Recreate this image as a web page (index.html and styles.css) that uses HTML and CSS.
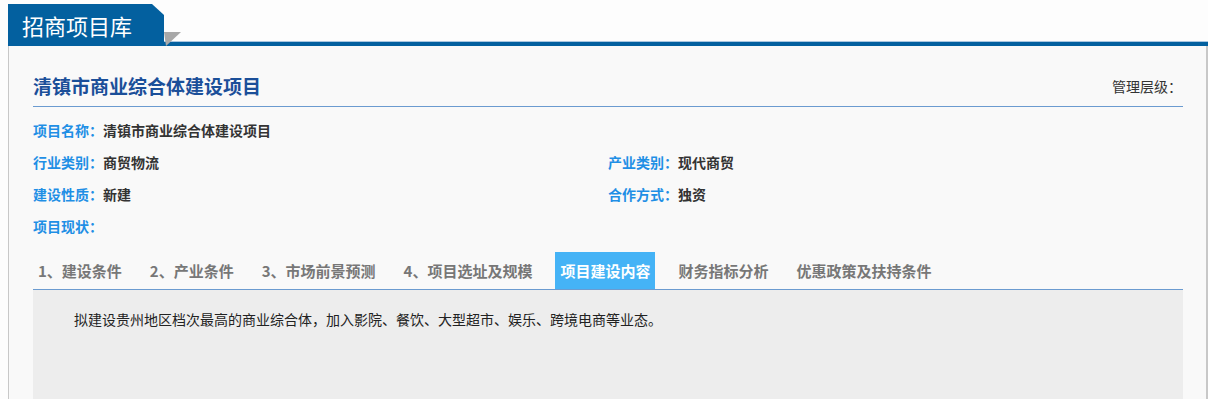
FILE: index.html
```html
<!DOCTYPE html>
<html lang="zh-CN">
<head>
    <meta charset="UTF-8">
    <meta name="viewport" content="width=device-width, initial-scale=1.0">
    <title>招商项目库</title>
    <link rel="stylesheet" href="styles.css">
</head>
<body>
    <div class="page">
        <!-- Header tab -->
        <div class="page-header">
            <div class="header-tab">招商项目库</div>
            <div class="header-line"></div>
        </div>

        <div class="project-box">
            <div class="project-title-row">
                <h1 class="project-title">清镇市商业综合体建设项目</h1>
                <span class="manage-level">管理层级：</span>
            </div>

            <!-- Basic info -->
            <div class="info-grid">
                <div class="info-item full"><span class="info-label">项目名称：</span><span class="info-value">清镇市商业综合体建设项目</span></div>
                <div class="info-item"><span class="info-label">行业类别：</span><span class="info-value">商贸物流</span></div>
                <div class="info-item"><span class="info-label">产业类别：</span><span class="info-value">现代商贸</span></div>
                <div class="info-item"><span class="info-label">建设性质：</span><span class="info-value">新建</span></div>
                <div class="info-item"><span class="info-label">合作方式：</span><span class="info-value">独资</span></div>
                <div class="info-item full"><span class="info-label">项目现状：</span><span class="info-value"></span></div>
            </div>

            <!-- Tabs -->
            <ul class="tabs">
                <li class="tab">1、建设条件</li>
                <li class="tab">2、产业条件</li>
                <li class="tab">3、市场前景预测</li>
                <li class="tab">4、项目选址及规模</li>
                <li class="tab active">项目建设内容</li>
                <li class="tab">财务指标分析</li>
                <li class="tab">优惠政策及扶持条件</li>
            </ul>
            <div class="tab-panel">
                <p>拟建设贵州地区档次最高的商业综合体，加入影院、餐饮、大型超市、娱乐、跨境电商等业态。</p>
            </div>
        </div>
    </div>
</body>
</html>
```

FILE: styles.css
```css
body {
    margin: 0;
    padding: 0;
    background: #fdfdfd;
    font-family: "Noto Sans CJK SC", "Noto Sans", sans-serif;
    color: #333;
}

.page {
    margin-left: 8px;
    width: 1200px;
}

.page-header {
    display: flex;
    align-items: flex-end;
    height: 42px;
    padding-top: 4px;
}

.header-tab {
    width: 156px;
    height: 42px;
    line-height: 42px;
    padding-left: 14px;
    box-sizing: border-box;
    background: #03609f;
    color: #fff;
    font-size: 22px;
    clip-path: polygon(0 0, 144px 0, 156px 11px, 156px 100%, 0 100%);
}

.header-line {
    flex: 1;
    height: 4px;
    background: #03609f;
    border-top: 1px solid #a9c6e0;
    position: relative;
}

/* grey fold next to the tab */
.header-line::before {
    content: '';
    position: absolute;
    left: 0;
    top: -10px;
    width: 17px;
    height: 14px;
    background: #a8a8a8;
    clip-path: polygon(0 0, 100% 0, 2px 100%);
}

.project-box {
    background: #f9f9f9;
    border-left: 1px solid #c8c8c8;
    border-right: 2px solid #c8c8c8;
    padding: 0 23px 0 24px;
}

.project-title-row {
    display: flex;
    justify-content: space-between;
    align-items: center;
    padding: 26px 0 6px;
    border-bottom: 1px solid #6b9bd0;
}

.project-title {
    margin: 0;
    font-size: 19px;
    line-height: 28px;
    font-weight: 700;
    color: #1b4f99;
}

.manage-level {
    font-size: 14px;
    color: #333;
    padding-right: 1px;
}

.info-grid {
    display: grid;
    grid-template-columns: 1fr 1fr;
    margin-top: 7px;
}

.info-item {
    line-height: 32px;
    font-size: 14px;
    font-weight: 700;
}

.info-item.full {
    grid-column: span 2;
}

.info-label {
    color: #1f8fe5;
}

.info-value {
    color: #333;
}

.tabs {
    list-style: none;
    margin: 10px 0 0;
    padding: 0;
    display: flex;
    gap: 18px;
    border-bottom: 1px solid #6b9bd0;
}

.tab {
    padding: 0 5px;
    height: 37px;
    line-height: 37px;
    font-size: 15px;
    font-weight: 700;
    color: #777;
}

.tab.active {
    background: #45b3f6;
    color: #fff;
}

.tab-panel {
    background: #ededed;
    padding: 19px 41px;
    height: 71px;
}

.tab-panel p {
    margin: 0;
    font-size: 14px;
    line-height: 20px;
    color: #222;
}
```
